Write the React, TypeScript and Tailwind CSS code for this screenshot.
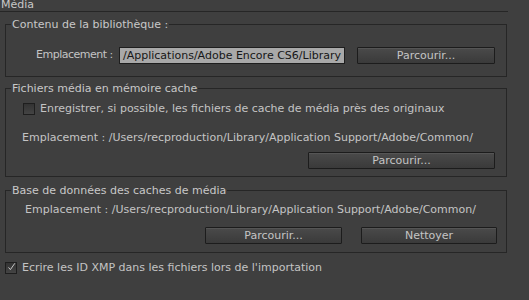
import React from 'react';

const font = { fontFamily: '"DejaVu Sans", "Liberation Sans", sans-serif' };

const Button: React.FC<{ label: string; className?: string }> = ({ label, className }) => (
  <button
    className={`h-[17px] border border-[#1c1c1c] bg-gradient-to-b from-[#4a4a4a] to-[#3a3a3a] text-[#c4c4c4] text-[11px] leading-[15px] rounded-[1px] shadow-[inset_0_1px_0_#555] ${className ?? ''}`}
  >
    {label}
  </button>
);

const Checkbox: React.FC<{ checked?: boolean }> = ({ checked }) => (
  <span className="w-[12px] h-[12px] border border-[#1e1e1e] bg-gradient-to-b from-[#333] to-[#444] flex items-center justify-center shrink-0">
    {checked && (
      <svg width="12" height="12" viewBox="0 0 12 12" className="-mt-[2px] ml-[1px]">
        <path d="M2 6.5 L4.5 9.5 L10.5 1" fill="none" stroke="#c8c8c8" strokeWidth="1.3" />
      </svg>
    )}
  </span>
);

const Group: React.FC<{ title: string; className?: string; children: React.ReactNode }> = ({ title, className, children }) => (
  <fieldset className={`ml-[5px] w-[502px] border border-[#262626] ${className ?? ''}`}>
    <legend className="ml-[5px] px-[1px] leading-[13px] text-[#c8c8c8]">{title}</legend>
    {children}
  </fieldset>
);

export default function App() {
  return (
    <div className="w-[529px] h-[300px] bg-[#3f3f3f] overflow-hidden text-[11px] text-[#c4c4c4]" style={font}>
      <div className="w-[508px] h-[12px] border-b border-[#262626] overflow-hidden">
        <div className="pl-[1px] leading-[13px] -mt-[2px] text-[#c8c8c8]">Média</div>
      </div>

      <Group title="Contenu de la bibliothèque :" className="mt-[6px] pb-[12px]">
        <div className="flex items-center pt-[16px]">
          <span className="ml-[30px] w-[83px] whitespace-nowrap tracking-[-0.5px]">Emplacement :</span>
          <div className="w-[226px] h-[17px] bg-[#a9a9a9] border border-[#1e1e1e] text-[#161616] leading-[15px] pl-[3px] overflow-hidden whitespace-nowrap">
            /Applications/Adobe Encore CS6/Library
          </div>
          <Button label="Parcourir..." className="ml-[12px] w-[138px]" />
        </div>
      </Group>

      <Group title="Fichiers média en mémoire cache" className="mt-[5px] pb-[7px]">
        <div className="flex items-center gap-[5px] ml-[17px] mt-[6px]">
          <Checkbox />
          <span>Enregistrer, si possible, les fichiers de cache de média près des originaux</span>
        </div>
        <div className="ml-[16px] mt-[13px] leading-[13px] whitespace-nowrap">
          Emplacement : /Users/recproduction/Library/Application Support/Adobe/Common/
        </div>
        <div className="flex justify-end pr-[11px] mt-[8px]">
          <Button label="Parcourir..." className="w-[187px] h-[16px] leading-[14px]" />
        </div>
      </Group>

      <Group title="Base de données des caches de média" className="mt-[7px] pb-[8px]">
        <div className="ml-[19px] mt-[6px] leading-[13px] whitespace-nowrap">
          Emplacement : /Users/recproduction/Library/Application Support/Adobe/Common/
        </div>
        <div className="flex justify-end gap-[19px] pr-[9px] mt-[11px]">
          <Button label="Parcourir..." className="w-[137px] h-[16px] leading-[14px]" />
          <Button label="Nettoyer" className="w-[136px] h-[16px] leading-[14px]" />
        </div>
      </Group>

      <div className="flex items-center gap-[5px] ml-[5px] mt-[7px]">
        <Checkbox checked />
        <span>Ecrire les ID XMP dans les fichiers lors de l'importation</span>
      </div>
    </div>
  );
}
